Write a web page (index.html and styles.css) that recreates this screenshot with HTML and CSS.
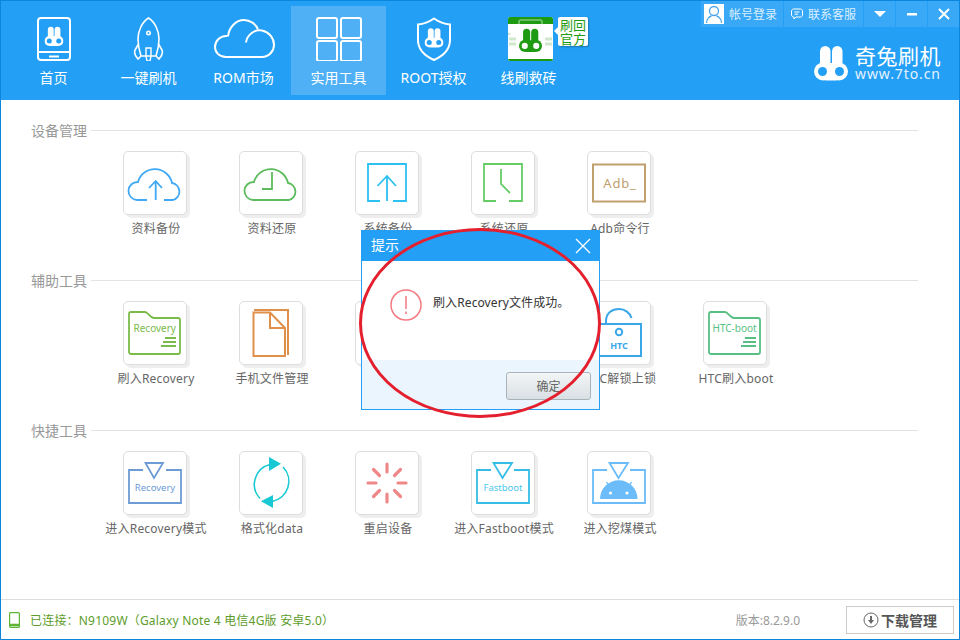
FILE: index.html
```html
<!DOCTYPE html>
<html lang="zh-CN">
<head>
  <meta charset="UTF-8">
  <title>奇兔刷机</title>
  <link rel="stylesheet" href="styles.css">
</head>
<body>
  <svg class="defs" width="0" height="0">
    <symbol id="rabbit" viewBox="0 0 34 35">
      <rect x="6" y="0" width="10.500" height="26" rx="5.200"/>
      <rect x="18" y="0" width="10.500" height="26" rx="5.200"/>
      <circle cx="9" cy="25.500" r="9"/>
      <circle cx="25" cy="25.500" r="9"/>
      <rect x="9" y="17" width="16" height="17.500" rx="3"/>
      <circle class="eye" cx="8.500" cy="25.500" r="4.500"/>
      <circle class="eye" cx="25.500" cy="25.500" r="4.500"/>
    </symbol>
  </svg>

  <div class="window">
    <header class="header">
      <nav class="nav">
        <a class="nav-item">
          <span class="nav-icon">
            <svg width="34" height="44" viewBox="0 0 34 44" fill="none" stroke="#fff" stroke-width="2">
              <rect x="1" y="1" width="32" height="42" rx="3"/>
              <path d="M1 35H33M12 39.500H22"/>
              <use class="rabbit-nav" href="#rabbit" x="7.500" y="9" width="19" height="21" stroke="none"/>
            </svg>
          </span>
          <span>首页</span>
        </a>
        <a class="nav-item">
          <span class="nav-icon">
            <svg width="32" height="44" viewBox="0 0 32 44" fill="none" stroke="#fff" stroke-width="1.600">
              <path d="M15.500 1C9 5 5 14 5 22c0 6 1 11 3 17h15c2-6 3-11 3-17 0-8-4-17-10.500-21Z"/>
              <path d="M5.500 27 2 33c-1 3 0 6 3 9l3-3M25.500 27 29 33c1 3 0 6-3 9l-3-3"/>
              <circle cx="15.500" cy="16" r="1.700"/>
              <path d="M13 39V31h5v8M13 39l1 5h3l1-5" stroke-width="1.400"/>
            </svg>
          </span>
          <span>一键刷机</span>
        </a>
        <a class="nav-item">
          <span class="nav-icon">
            <svg width="62" height="44" viewBox="0 0 62 44" fill="none" stroke="#fff" stroke-width="2">
              <path d="M14 40H13C6 40 2 35 2 30c0-6 5-11 11-11 1 0 2 0 2 .5C16 10 23 3 31 3c6 0 12 4 14 9.500"/>
              <path d="M14 40H49c7 0 12-6 12-12 0-7-5-13-12-14.500-7-1.500-15 4-16 12"/>
            </svg>
          </span>
          <span>ROM市场</span>
        </a>
        <a class="nav-item nav-item-active">
          <span class="nav-icon">
            <svg width="46" height="44" viewBox="0 0 46 44" fill="none" stroke="#fff" stroke-width="2">
              <rect x="1" y="1" width="20" height="20" rx="2"/>
              <rect x="25" y="1" width="20" height="20" rx="2"/>
              <rect x="1" y="24" width="20" height="20" rx="2"/>
              <rect x="25" y="24" width="20" height="20" rx="2"/>
            </svg>
          </span>
          <span>实用工具</span>
        </a>
        <a class="nav-item">
          <span class="nav-icon">
            <svg width="36" height="44" viewBox="0 0 36 44" fill="none" stroke="#fff" stroke-width="2">
              <path d="M18 1.500C13 5 8 7 2 7.500V23c0 9 7 16 16 20 9-4 16-11 16-20V7.500C28 7 23 5 18 1.500Z"/>
              <use class="rabbit-nav" href="#rabbit" x="8.500" y="11" width="19" height="20" stroke="none"/>
            </svg>
          </span>
          <span>ROOT授权</span>
        </a>
        <a class="nav-item">
          <span class="nav-icon nav-icon-brick">
            <svg width="45" height="44" viewBox="0 0 45 44">
              <rect width="45" height="44" rx="2" fill="#fff"/>
              <path d="M0 7V2a2 2 0 0 1 2-2h41a2 2 0 0 1 2 2v5Z" fill="#1f9b13"/>
              <path d="M0 42H45a2 2 0 0 1-2 2H2a2 2 0 0 1-2-2Z" fill="#1f9b13"/>
              <path d="M11 7V5a2 2 0 0 1 2-2h19a2 2 0 0 1 2 2v2" fill="none" stroke="#7fc878" stroke-width="1.500"/>
              <path d="M1 16v2M1 22h7M1 27h7M37 22h7M37 27h7" stroke="#cfe8cb" stroke-width="3"/>
              <use class="rabbit-green" href="#rabbit" x="11" y="11" width="23" height="25"/>
            </svg>
          </span>
          <span>线刷救砖</span>
          <span class="brick-tip">刷回<br>官方</span>
        </a>
      </nav>

      <div class="head-right">
        <div class="topbar">
          <a class="top-btn top-login">
            <span class="avatar">
              <svg width="20" height="20" viewBox="0 0 20 20" fill="none" stroke="#48a6ee" stroke-width="1.300">
                <circle cx="10" cy="7" r="4.500"/>
                <path d="M2.500 19c0-4 3-6.500 5-7M17.500 19c0-4-3-6.500-5-7"/>
              </svg>
            </span>
            帐号登录
          </a>
          <a class="top-btn top-service">
            <svg width="12" height="12" viewBox="0 0 12 12" fill="none" stroke="#fff" stroke-width="1">
              <path d="M2.500 1H9.500C10.500 1 11.500 2 11.500 3V7C11.500 8 10.500 9 9.500 9H5L3 11V9H2.500C1.500 9 .5 8 .5 7V3C.5 2 1.500 1 2.500 1ZM3.500 4H8.500M3.500 6.200H7"/>
            </svg>
            联系客服
          </a>
          <a class="top-btn top-icon">
            <svg width="12" height="6" viewBox="0 0 12 6"><path d="M0 0H12L6 6Z" fill="#fff"/></svg>
          </a>
          <a class="top-btn top-icon">
            <svg width="10" height="3" viewBox="0 0 10 3"><rect width="10" height="2.500" fill="#fff"/></svg>
          </a>
          <a class="top-btn top-icon">
            <svg width="12" height="12" viewBox="0 0 12 12"><path d="M1 1 11 11M11 1 1 11" stroke="#fff" stroke-width="2"/></svg>
          </a>
        </div>
        <div class="logo">
          <svg class="logo-rabbit rabbit-logo" width="34" height="35"><use href="#rabbit"/></svg>
          <div class="logo-text">
            <div class="logo-name">奇兔刷机</div>
            <div class="logo-url">www.7to.cn</div>
          </div>
        </div>
      </div>
    </header>

    <main class="main">
      <section class="section">
        <h2 class="section-title"><span>设备管理</span></h2>
        <div class="tools">
          <div class="tool">
            <div class="tile">
              <svg width="64" height="64" viewBox="0 0 64 64" fill="none" stroke="#3fa9f5" stroke-width="1.800">
                <path d="M24 49H14A9 9 0 0 1 15 31 17.500 17.500 0 0 1 49 32 8.700 8.700 0 0 1 50 49H41"/>
                <path d="M32.700 49V30M26 37 32.700 30 39 37"/>
              </svg>
            </div>
            <div class="tool-name">资料备份</div>
          </div>
          <div class="tool">
            <div class="tile">
              <svg width="64" height="64" viewBox="0 0 64 64" fill="none" stroke="#5cbb5c" stroke-width="1.800">
                <path d="M14 49A9 9 0 0 1 15 31 17.500 17.500 0 0 1 49 32 8.700 8.700 0 0 1 50 49Z"/>
                <path d="M33 21V38H23"/>
              </svg>
            </div>
            <div class="tool-name">资料还原</div>
          </div>
          <div class="tool">
            <div class="tile">
              <svg width="64" height="64" viewBox="0 0 64 64" fill="none" stroke="#2cc1f0" stroke-width="1.800">
                <path d="M25 50H13V13H51V50H38"/>
                <path d="M32 50V25M22.500 35 32 25 41 35"/>
              </svg>
            </div>
            <div class="tool-name">系统备份</div>
          </div>
          <div class="tool">
            <div class="tile">
              <svg width="64" height="64" viewBox="0 0 64 64" fill="none" stroke="#66cc66" stroke-width="1.800">
                <path d="M25 50H13V13H51V50H38"/>
                <path d="M30 18V33L39 42"/>
              </svg>
            </div>
            <div class="tool-name">系统还原</div>
          </div>
          <div class="tool">
            <div class="tile">
              <svg width="64" height="64" viewBox="0 0 64 64" fill="none" stroke="#c0a06f" stroke-width="2">
                <rect x="6" y="13.500" width="52" height="37"/>
                <text class="svg-text adb-text" x="33" y="37" stroke="none" text-anchor="middle">Adb_</text>
              </svg>
            </div>
            <div class="tool-name">Adb命令行</div>
          </div>
        </div>
      </section>

      <section class="section">
        <h2 class="section-title"><span>辅助工具</span></h2>
        <div class="tools">
          <div class="tool">
            <div class="tile">
              <svg width="64" height="64" viewBox="0 0 64 64" fill="none" stroke="#7abb4b" stroke-width="1.800">
                <path d="M6 13a2 2 0 0 1 2-2H22C25 11 27 17 31 17H55a2 2 0 0 1 2 2V51a2 2 0 0 1-2 2H8a2 2 0 0 1-2-2Z"/>
                <path d="M42 37H53M40 41H53M38 45H53"/>
                <text class="svg-text folder-text" x="10.500" y="31" fill="#7abb4b" stroke="none">Recovery</text>
              </svg>
            </div>
            <div class="tool-name">刷入Recovery</div>
          </div>
          <div class="tool">
            <div class="tile">
              <svg width="64" height="64" viewBox="0 0 64 64" fill="none" stroke="#e0904a" stroke-width="2">
                <path d="M15 9H49V54"/>
                <path d="M14.500 11.500H31L46 27V55H14.500Z" fill="#fff"/>
                <path d="M31 11.500V27H46"/>
              </svg>
            </div>
            <div class="tool-name">手机文件管理</div>
          </div>
          <div class="tool"><div class="tile"></div></div>
          <div class="tool"><div class="tile"></div></div>
          <div class="tool">
            <div class="tile">
              <svg width="64" height="64" viewBox="0 0 64 64" fill="none" stroke="#3ba7e8" stroke-width="2">
                <rect x="10" y="23" width="44" height="32"/>
                <path d="M19 22V20C19 12 25 8 32 8 38 8 43 12 44.500 17"/>
                <circle cx="32" cy="31" r="3.200"/>
                <text class="svg-text htc-text" x="32" y="48" fill="#3ba7e8" stroke="none" text-anchor="middle">HTC</text>
              </svg>
            </div>
            <div class="tool-name">HTC解锁上锁</div>
          </div>
          <div class="tool">
            <div class="tile">
              <svg width="64" height="64" viewBox="0 0 64 64" fill="none" stroke="#57bf84" stroke-width="1.800">
                <path d="M6 13a2 2 0 0 1 2-2H22C25 11 27 17 31 17H55a2 2 0 0 1 2 2V51a2 2 0 0 1-2 2H8a2 2 0 0 1-2-2Z"/>
                <path d="M42 37H53M40 41H53M38 45H53"/>
                <text class="svg-text folder-text" x="9.500" y="31" fill="#57bf84" stroke="none">HTC-boot</text>
              </svg>
            </div>
            <div class="tool-name">HTC刷入boot</div>
          </div>
        </div>
      </section>

      <section class="section">
        <h2 class="section-title"><span>快捷工具</span></h2>
        <div class="tools">
          <div class="tool">
            <div class="tile">
              <svg width="64" height="64" viewBox="0 0 64 64" fill="none" stroke="#6d9bd4" stroke-width="1.800">
                <path d="M20 19H6V52H58V19H43M22.500 12H40L31 27Z"/>
                <text class="svg-text mode-text" x="32" y="40" fill="#6d9bd4" stroke="none" text-anchor="middle">Recovery</text>
              </svg>
            </div>
            <div class="tool-name">进入Recovery模式</div>
          </div>
          <div class="tool">
            <div class="tile">
              <svg width="64" height="64" viewBox="0 0 64 64" fill="none" stroke="#18c9d4" stroke-width="1.600">
                <path d="M31 13.500A20.500 20.500 0 0 0 21 47.500"/>
                <path d="M44 16A20.500 20.500 0 0 1 33 50.500"/>
                <path d="M30 6V20L42 12.700ZM34 44V57L22 50.300Z" fill="#18c9d4" stroke="none"/>
              </svg>
            </div>
            <div class="tool-name">格式化data</div>
          </div>
          <div class="tool">
            <div class="tile">
              <svg width="64" height="64" viewBox="0 0 64 64" fill="none" stroke="#ee8888" stroke-width="3.200" stroke-linecap="round">
                <path d="M13 32H21M43 32H51M32 13V21M32 43V51M18.500 18.500 24.500 24.500M39.500 39.500 45.500 45.500M45.500 18.500 39.500 24.500M24.500 39.500 18.500 45.500"/>
              </svg>
            </div>
            <div class="tool-name">重启设备</div>
          </div>
          <div class="tool">
            <div class="tile">
              <svg width="64" height="64" viewBox="0 0 64 64" fill="none" stroke="#36bde6" stroke-width="1.800">
                <path d="M20 19H6V52H58V19H43M22.500 12H41L31.500 27Z"/>
                <text class="svg-text mode-text" x="32" y="40" fill="#4cc7ea" stroke="none" text-anchor="middle">Fastboot</text>
              </svg>
            </div>
            <div class="tool-name">进入Fastboot模式</div>
          </div>
          <div class="tool">
            <div class="tile">
              <svg width="64" height="64" viewBox="0 0 64 64" fill="none" stroke="#6bbcf9" stroke-width="1.800">
                <path d="M20 19H6V52H58V19H43M22.500 12H41L31.500 27Z"/>
                <path d="M13 48A18.700 18.700 0 0 1 50.500 48Z" fill="#6bbcf9" stroke="none"/>
                <path d="M23 37 19.500 31M41 37 44.500 31" stroke-width="1.400"/>
                <circle cx="23.500" cy="42" r="1.600" fill="#fff" stroke="none"/>
                <circle cx="40" cy="42" r="1.600" fill="#fff" stroke="none"/>
              </svg>
            </div>
            <div class="tool-name">进入挖煤模式</div>
          </div>
        </div>
      </section>
    </main>

    <footer class="status">
      <svg class="status-phone" width="11" height="16" viewBox="0 0 11 16" fill="none" stroke="#5fb336" stroke-width="1.200">
        <rect x=".6" y=".6" width="9.800" height="14.800" rx="1"/>
        <path d="M0 13H11" stroke-width="2.500"/>
      </svg>
      <span class="status-text">已连接：N9109W（Galaxy Note 4 电信4G版 安卓5.0）</span>
      <span class="version">版本:8.2.9.0</span>
      <a class="download-btn">
        <svg width="16" height="16" viewBox="0 0 16 16" fill="none" stroke="#666" stroke-width="1">
          <circle cx="8" cy="8" r="7"/>
          <path d="M8 4V9" stroke-width="2"/>
          <path d="M5 8H11L8 12Z" fill="#666" stroke="none"/>
        </svg>
        下载管理
      </a>
    </footer>
  </div>

  <div class="dialog">
    <div class="dialog-title">
      <span class="dialog-caption">提示</span>
      <svg width="16" height="16" viewBox="0 0 16 16"><path d="M1 1 15 15M15 1 1 15" stroke="#fff" stroke-width="1.300"/></svg>
    </div>
    <div class="dialog-body">
      <svg width="32" height="32" viewBox="0 0 32 32" fill="none" stroke="#f47a82" stroke-width="1.500">
        <circle cx="16" cy="16" r="15"/>
        <path d="M16 7V20M16 22.500V25"/>
      </svg>
      <p class="dialog-msg">刷入Recovery文件成功。</p>
    </div>
    <div class="dialog-foot">
      <button class="dialog-ok">确定</button>
    </div>
  </div>

  <svg class="mark" width="250" height="196" viewBox="0 0 250 196" fill="none">
    <ellipse cx="125" cy="98" rx="119.500" ry="93.500" stroke="#e4202e" stroke-width="3"/>
  </svg>
</body>
</html>
```

FILE: styles.css
```css
* { box-sizing: border-box; }
body {
  margin: 0;
  width: 960px;
  height: 640px;
  position: relative;
  overflow: hidden;
  font-family: "Noto Sans", "Noto Sans CJK SC", sans-serif;
  font-size: 12px;
  background: #fff;
}
a { color: inherit; text-decoration: none; }
.defs { position: absolute; }
.eye { fill: var(--eye); }
.rabbit-nav { fill: #fff; --eye: #239ff5; }
.rabbit-green { fill: #1f9b13; --eye: #fff; }
.rabbit-logo { fill: #fff; --eye: #239ff5; }

.window {
  height: 640px;
  display: flex;
  flex-direction: column;
  border: 1px solid #0a87dc;
}

/* header */
.header {
  height: 99px;
  flex: none;
  display: flex;
  justify-content: space-between;
  background: #239ff5;
  color: #fff;
}
.nav { display: flex; padding: 5px 0 0 5px; }
.nav-item {
  position: relative;
  width: 95px;
  height: 89px;
  padding-top: 11px;
  display: flex;
  flex-direction: column;
  align-items: center;
  font-size: 14px;
  line-height: 20px;
}
.nav-item-active { background: #4fb0f6; }
.nav-icon { height: 44px; margin-bottom: 7px; display: flex; justify-content: center; }
.nav-icon-brick { margin-left: 4px; }
.brick-tip {
  position: absolute;
  left: 77px;
  top: 11px;
  width: 30px;
  height: 29px;
  padding-top: 1px;
  background: #fff;
  border-radius: 2px;
  color: #1f9b13;
  font-size: 13px;
  line-height: 14px;
  text-align: center;
  box-shadow: 1px 1px 2px rgba(0, 0, 0, .25);
}
.brick-tip::before {
  content: "";
  position: absolute;
  left: -4px;
  top: 10px;
  border: 4px solid transparent;
  border-left: 0;
  border-right-color: #fff;
}
.head-right { display: flex; flex-direction: column; align-items: flex-end; }
.topbar { display: flex; gap: 1px; height: 26px; }
.top-btn {
  display: flex;
  align-items: center;
  justify-content: center;
  height: 26px;
  background: rgba(255, 255, 255, .1);
  color: #dbefff;
}
.top-login { width: 82px; gap: 5px; justify-content: flex-start; padding-left: 3px; }
.top-service { width: 79px; gap: 5px; }
.top-icon { width: 31px; }
.avatar { width: 20px; height: 20px; background: #fff; display: block; }
.logo { display: flex; gap: 7px; margin: 19px 18px 0 0; }
.logo-text { width: 86px; }
.logo-name { font-size: 21px; line-height: 20px; letter-spacing: .5px; white-space: nowrap; }
.logo-url { font-size: 14px; line-height: 16px; letter-spacing: .9px; white-space: nowrap; color: #e3f2ff; }

/* tools */
.main { flex: 1; padding: 20px 41px 0 30px; }
.section { margin-bottom: 33px; }
.section-title {
  margin: 0 0 11px;
  height: 20px;
  display: flex;
  align-items: center;
  gap: 4px;
  font-size: 14px;
  font-weight: normal;
  color: #999;
}
.section-title::after { content: ""; flex: 1; height: 1px; background: #e3e3e3; }
.tools { display: grid; grid-template-columns: repeat(6, 116px); margin-left: 66px; }
.tool { height: 86px; display: flex; flex-direction: column; align-items: center; }
.tile {
  width: 64px;
  height: 64px;
  flex: none;
  display: flex;
  align-items: center;
  justify-content: center;
  border: 1px solid #ddd;
  border-radius: 5px;
  background: #fff;
  box-shadow: 3px 3px 0 #eee;
}
.tile svg { flex: none; }
.tool-name {
  margin-top: 5px;
  padding-left: 2px;
  line-height: 18px;
  letter-spacing: .2px;
  color: #666;
  white-space: nowrap;
}
.svg-text { font-family: "Noto Sans", sans-serif; }
.adb-text { font-size: 13px; fill: #c0a06f; letter-spacing: .8px; }
.folder-text { font-size: 10px; }
.htc-text { font-size: 9px; font-weight: bold; }
.mode-text { font-size: 9.500px; }

/* status bar */
.status {
  height: 40px;
  flex: none;
  display: flex;
  align-items: center;
  padding: 0 5px 0 8px;
  border-top: 1px solid #ddd;
}
.status-text { margin-left: 10px; letter-spacing: .2px; color: #5d9c2a; }
.version { margin-left: auto; color: #999; }
.download-btn {
  width: 108px;
  height: 28px;
  margin-left: 46px;
  display: flex;
  align-items: center;
  justify-content: center;
  gap: 2px;
  border: 1px solid #ccc;
  color: #555;
  font-size: 14px;
  font-weight: bold;
}

/* dialog */
.dialog {
  position: absolute;
  left: 361px;
  top: 230px;
  width: 239px;
  height: 180px;
  display: flex;
  flex-direction: column;
  background: #fff;
  border: 1px solid #239ff5;
}
.dialog-title {
  height: 30px;
  padding: 0 8px 0 9px;
  flex: none;
  display: flex;
  align-items: center;
  justify-content: space-between;
  background: #239ff5;
  color: #fff;
  font-size: 14px;
}
.dialog-caption { padding-bottom: 4px; }
.dialog-body { flex: 1; display: flex; gap: 11px; padding: 28px 0 0 28px; }
.dialog-msg { margin: 0; padding-top: 5px; line-height: 18px; letter-spacing: .1px; color: #333; }
.dialog-foot {
  height: 49px;
  padding: 12px 8px 0 0;
  display: flex;
  justify-content: flex-end;
  align-items: flex-start;
  background: #ebf5fd;
}
.dialog-ok {
  width: 85px;
  height: 28px;
  padding: 0;
  border: 1px solid #a9b3b9;
  border-radius: 3px;
  background: linear-gradient(#f3f5f6, #d9e0e4);
  color: #666;
  font: inherit;
}
.mark { position: absolute; left: 355px; top: 225px; pointer-events: none; }
```
